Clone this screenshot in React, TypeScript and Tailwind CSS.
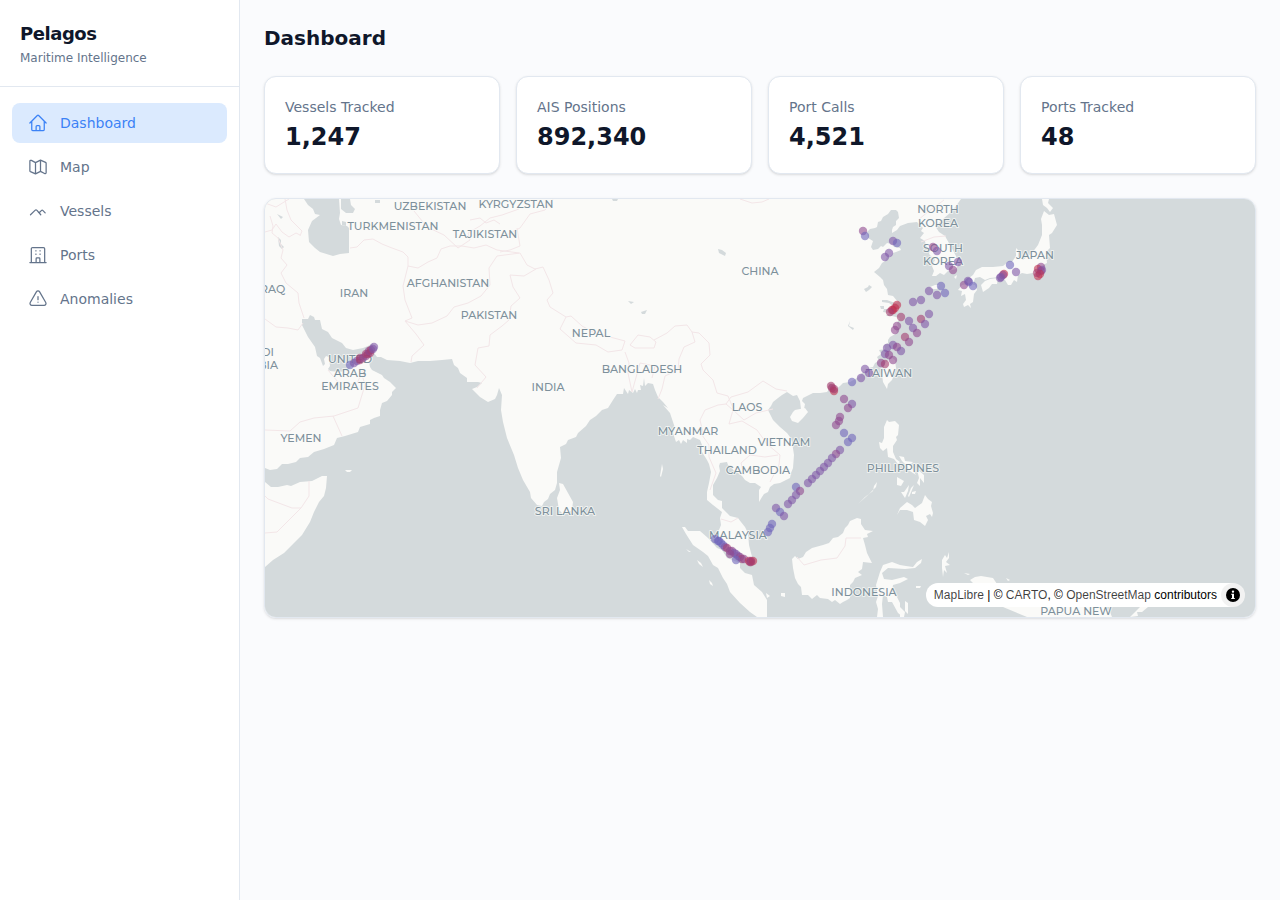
import React from "react";
import { HiOutlineExclamationTriangle, HiOutlineHome } from "react-icons/hi2";

const stroke = {
  width: 20,
  height: 20,
  viewBox: "0 0 24 24",
  fill: "none",
  stroke: "currentColor",
  strokeWidth: 1.5,
  strokeLinecap: "round",
  strokeLinejoin: "round",
  "aria-hidden": true,
} as const;

function MapIcon() {
  return (
    <svg {...stroke}>
      <path d="M9 6.75v13.5M15 3.75v13.5M9 6.75 4.1 4.1C3.2 3.6 2.25 4.2 2.25 5.1v11.3c0 .5.3.9.7 1.1L9 20.25l6-3 4.9 2.5c.9.5 1.85-.1 1.85-1V7.6c0-.5-.3-.9-.7-1.1L15 3.75Z" />
    </svg>
  );
}

function VesselIcon() {
  return (
    <svg {...stroke}>
      <path d="M3 16.5 8.4 11.3c.7-.7 1.7-.7 2.4 0l4.5 5.2M12.6 13.6l1.4-.1 2-2c.6-.6 1.4-.6 2 0l2.6 2.7" />
    </svg>
  );
}

function PortIcon() {
  return (
    <svg {...stroke}>
      <path d="M2.25 21h19.5M4 21V4.5C4 3.7 4.7 3 5.5 3h13c.8 0 1.5.7 1.5 1.5V21M9.3 7h.4M14.3 7h.4M9.3 11h.4M14.3 11h.4M9.75 21v-4.5c0-.6.4-1 1-1h2.5c.6 0 1 .4 1 1V21" />
    </svg>
  );
}

const nav = [
  { label: "Dashboard", icon: <HiOutlineHome size={20} />, active: true },
  { label: "Map", icon: <MapIcon /> },
  { label: "Vessels", icon: <VesselIcon /> },
  { label: "Ports", icon: <PortIcon /> },
  { label: "Anomalies", icon: <HiOutlineExclamationTriangle size={20} /> },
];

const stats = [
  { label: "Vessels Tracked", value: "1,247" },
  { label: "AIS Positions", value: "892,340" },
  { label: "Port Calls", value: "4,521" },
  { label: "Ports Tracked", value: "48" },
];

const land = [
  // Eurasia and Arabia
  "265,199 961,199 956,206 950,213 944,218 939,223 935,226 939,232 945,236 950,245 956,256 959,263 956,269 948,271 944,275 940,273 936,276 932,276 934,271 932,266 935,260 929,254 930,249 926,246 925,241 920,238 924,233 921,231 923,228 917,222 908,223 900,226 897,230 892,233 892,230 893,227 896,225 896,221 899,218 898,212 896,210 891,210 888,214 883,217 881,221 878,222 877,227 875,228 870,229 867,232 868,238 873,241 871,247 873,250 878,249 881,246 883,247 887,243 892,244 894,247 900,248 901,250 896,252 893,253 890,257 887,257 885,261 882,263 879,268 874,272 880,277 883,280 884,285 887,289 888,295 893,296 898,302 895,303 887,300 882,300 882,302 889,303 893,306 889,309 884,309 883,312 889,313 886,316 892,316 900,318 897,323 899,328 896,330 897,333 890,337 888,340 888,343 884,345 885,349 879,350 881,354 877,357 879,361 875,363 873,367 868,368 867,371 863,372 857,378 850,382 843,383 840,386 835,390 832,384 828,383 830,388 827,392 820,393 813,393 803,398 802,401 805,404 804,409 801,409 800,401 797,395 793,396 787,392 782,395 778,398 773,402 771,406 768,410 773,420 780,427 787,433 790,437 792,442 794,455 793,468 791,473 790,478 786,480 780,483 774,484 770,487 768,492 764,494 762,497 759,502 759,490 761,487 755,483 750,483 745,480 742,476 738,473 733,470 731,465 728,465 727,462 720,463 719,466 720,471 717,478 713,485 713,495 718,500 722,501 722,508 727,513 730,516 738,518 741,522 745,527 748,533 749,545 751,553 753,560 746,563 740,560 733,555 728,550 723,548 717,542 714,536 719,530 721,525 720,518 722,512 713,505 707,500 707,492 709,483 711,472 709,464 707,460 702,452 702,445 700,440 693,437 690,440 687,439 687,443 683,440 681,444 679,440 676,442 673,433 675,428 673,422 670,413 663,405 668,408 663,402 658,397 655,390 653,384 648,383 645,386 644,378 643,386 640,385 641,390 638,390 637,393 635,389 633,393 629,390 628,394 624,388 623,394 617,394 613,400 608,408 602,410 596,416 590,420 586,426 578,433 576,437 568,440 566,444 560,447 561,458 559,465 557,472 557,483 555,490 550,494 548,499 544,502 542,506 537,505 531,498 530,492 523,480 518,468 514,455 507,438 503,422 501,410 502,395 499,388 497,395 495,399 488,402 480,397 472,389 477,387 482,383 478,382 467,382 467,378 460,373 458,368 454,365 452,359 442,360 430,361 418,361 410,363 400,361 387,360 381,357 377,357 372,350 373,343 368,346 363,348 353,350 346,348 342,343 332,338 328,332 322,329 320,320 315,320 314,317 310,315 308,319 302,319 302,325 308,337 315,347 317,356 320,358 323,366 325,364 324,359 326,356 329,357 330,366 328,369 330,371 340,372 348,370 353,365 357,362 367,357 371,350 373,354 369,362 370,367 372,370 382,375 384,378 390,382 396,388 392,392 392,395 387,401 382,403 380,410 380,416 374,418 370,420 370,424 360,427 358,432 345,436 337,438 334,445 324,449 314,452 308,457 300,458 296,462 288,464 282,464 277,469 270,470 265,468",
  // Horn of Africa
  "265,482 271,487 278,487 287,485 291,486 300,482 312,481 322,476 327,476 326,488 324,496 319,502 314,512 310,522 302,535 294,543 284,553 273,560 265,567",
  // Socotra
  "345,470 352,470 350,472 347,472",
  // Sri Lanka
  "559,483 563,484 568,493 573,502 572,510 568,513 563,514 559,510 557,498 560,490",
  // Andaman Islands
  "662,464 663,469 661,477 660,476",
  // Sumatra
  "682,527 685,527 688,531 700,531 708,538 717,548 722,550 727,558 740,563 740,568 745,573 752,575 754,585 762,592 767,600 767,617 757,617 750,612 740,603 730,592 727,584 723,578 718,568 713,565 708,556 703,552 693,545 686,534",
  "686,549 691,552 689,552",
  "697,560 701,563 703,567 699,564",
  "709,580 712,583 713,586 710,584",
  "766,593 770,596 767,598",
  "781,593 785,593 785,597 781,596",
  // Borneo
  "792,559 795,556 798,559 803,557 806,552 812,548 823,545 829,543 833,538 838,537 843,533 845,528 848,525 850,521 857,518 861,519 861,524 865,530 873,531 867,534 868,537 863,538 865,545 867,553 872,563 863,562 862,569 858,572 862,575 855,578 853,582 850,585 850,598 847,600 843,602 840,604 835,600 832,602 828,599 820,598 817,595 812,599 808,595 802,595 801,587 798,584 795,578 793,568",
  // Sulawesi
  "880,572 883,565 892,562 900,565 906,566 913,567 917,562 922,559 921,563 915,568 905,569 888,568 882,573 884,579 892,580 900,578 904,577 908,579 900,583 893,585 892,592 897,597 900,603 900,609 903,613 903,617 898,613 892,602 888,602 887,597 883,595 882,604 883,617 877,617 878,609 876,602 878,596 876,585",
  "905,601 908,603 908,614 905,611",
  // Halmahera
  "942,560 945,555 947,558 949,552 949,558 946,562 950,565 945,566 947,573 944,570 943,577 942,568",
  "916,586 921,586 920,588 916,588",
  "964,573 970,574 968,575",
  // Luzon
  "887,420 889,422 895,421 899,425 898,435 896,437 897,440 893,446 893,452 896,459 900,462 898,464 894,459 888,457 887,448 883,451 880,448 879,442 882,443 884,438 884,427",
  "899,456 904,457 905,461 913,462 910,465 916,475 910,471 907,466 902,461",
  // Visayas
  "897,477 904,481 901,486 897,485",
  "909,485 908,491 905,498 901,492 904,492",
  "914,485 909,497 908,496 911,488",
  "917,469 924,475 924,483 920,478 920,486 917,483 919,478",
  "912,492 916,491 915,494 912,494",
  // Mindanao
  "897,515 900,508 907,502 912,505 915,508 922,503 925,495 928,499 932,502 931,506 933,513 932,517 930,514 926,516 928,520 925,526 920,522 914,520 913,512 907,510 900,510",
  // Palawan
  "858,504 865,497 873,491 874,486 877,482 876,487 868,495",
  // Taiwan
  "892,358 895,360 896,368 894,375 892,380 888,384 887,389 883,382 882,374 885,363",
  // Hainan
  "790,417 793,412 795,410 805,408 808,412 803,418 798,423 792,421",
  // Honshu
  "1042,225 1041,219 1044,211 1049,215 1054,214 1057,225 1052,233 1049,235 1050,248 1046,252 1047,263 1043,265 1041,278 1035,278 1033,273 1027,274 1022,273 1018,275 1017,282 1014,280 1011,285 1008,285 1005,280 1000,277 990,278 985,280 980,277 975,278 973,285 967,283 969,278 973,275 976,270 982,267 993,267 1003,266 1008,262 1012,262 1016,256 1016,248 1018,250 1018,257 1023,260 1032,253 1038,245 1042,235",
  "1042,199 1049,199 1048,203 1053,208 1050,212 1047,208 1043,205",
  // Shikoku
  "981,285 985,281 990,279 998,278 997,284 992,284 989,288 983,292",
  // Kyushu
  "958,290 962,285 968,284 975,285 977,290 974,294 973,302 970,304 971,308 968,305 964,307 963,304 966,300 965,294 961,296 962,291",
  "954,277 957,275 956,279",
  // Jeju
  "930,287 935,285 939,285 937,289 931,289",
  // New Guinea
  "970,580 975,577 981,576 987,577 993,578 997,584 1030,590 1080,600 1105,607 1110,612 1112,617 1027,617 1015,612 1003,607 985,600 980,590",
  "1140,607 1148,607 1142,612 1137,612 1138,616 1130,617",
  "1006,578 1010,580 1008,581",
  "900,607 905,612 904,617 900,617",
];

const lakes = [
  "304,199 308,205 313,209 315,214 320,215 312,221 308,230 309,242 315,248 320,252 333,256 340,254 349,253 349,228 347,226 341,225 339,219 340,213 339,199",
  "341,199 350,199 351,205 355,209 353,213 346,213 341,209",
  "342,221 346,222 346,226 342,225",
  "375,200 380,200 380,203 375,203",
  "278,237 281,240 281,244 284,247 282,249 279,246",
  "277,214 283,217 281,219",
  "612,199 618,199 617,201 613,201",
  "718,249 722,250 726,253 725,256 719,253",
  "628,301 634,302 631,304",
  "641,312 647,310 645,314 642,314",
  "850,321 849,326 854,328 853,330 848,326",
  "864,289 868,287 869,285 872,287 869,290 866,292",
  "880,306 884,306 884,309 881,309",
];

const borders = [
  "265,232 272,230 276,224 282,232 289,237 296,233 300,235",
  "285,199 287,210 291,220 297,226 302,231 300,236",
  "270,216 273,226 272,233 278,238 283,250 281,258 287,265 281,273 286,283 298,293 299,303 304,318",
  "265,319 276,327 288,328 298,330 303,323",
  "350,248 357,247 364,240 373,239 382,244 392,248 403,252 408,257 408,266",
  "408,266 403,286 405,300 412,318 405,321",
  "408,266 418,268 428,262 437,258 441,249 450,246 462,246 474,248 486,245 497,250 519,253",
  "405,321 418,325 432,323 447,316 454,307 468,303 481,296 490,285 489,268 497,256 520,253",
  "405,321 416,334 424,345 412,356 411,362",
  "414,211 427,227 444,235 458,248",
  "458,248 470,240 468,233 480,226 490,218 502,215 519,209",
  "470,220 480,218 486,223 494,220 500,224",
  "500,238 520,228 530,214 545,210 553,199",
  "517,228 520,246 510,250 500,252",
  "520,253 527,265 535,269 543,267 549,280 553,293 547,300 550,307 566,317",
  "536,269 524,276 510,275 513,287 520,298 511,306 509,320 502,326 490,335 489,346 478,348 475,365 486,377 477,388",
  "566,317 560,329 576,343 596,345 608,352 622,350 625,341 610,337 595,333 582,326 571,316 566,317",
  "630,345 638,335 650,337 656,342 654,348 635,348 630,345",
  "654,340 667,333 675,326 687,325 692,332 699,333 709,343 710,355 701,364 703,370 713,380 717,393 728,396 733,408",
  "692,332 695,342 684,347 679,359 678,370 665,376 662,389 658,399",
  "625,352 629,363 628,373 632,392 640,363 655,366 652,378",
  "703,433 700,420 705,410 718,405 726,404 733,410 744,420 756,413 773,409",
  "702,435 709,445 709,457 716,473 710,490",
  "726,404 731,397 748,392 763,381 776,389 787,391",
  "733,410 729,424 742,421 757,430 767,444 780,455 779,465 770,482",
  "744,475 741,463 750,455 765,457 778,455",
  "721,519 731,522 738,518",
  "797,557 804,565 821,560 837,558 845,546 846,538 861,538",
  "265,430 290,431 300,422 314,418 334,416 358,408 365,385 360,368",
  "333,416 342,436",
  "309,481 309,496 301,508 292,508 268,499 265,496",
  "301,508 277,532 265,533",
  "918,220 929,211 944,200",
  "921,242 934,237 946,236",
  "740,199 752,203 762,202 769,199",
  "265,203 276,207 289,199",
  "328,370 338,382 356,385 364,369",
];

const labels: [string, number, number][] = [
  ["UZBEKISTAN", 430, 210], ["KYRGYZSTAN", 516, 208], ["TURKMENISTAN", 393, 230],
  ["TAJIKISTAN", 485, 238], ["AFGHANISTAN", 448, 287], ["IRAN", 354, 297],
  ["IRAQ", 271, 293], ["PAKISTAN", 489, 319], ["NEPAL", 591, 337],
  ["CHINA", 760, 275], ["BANGLADESH", 642, 373], ["INDIA", 548, 391],
  ["SAUDI", 256, 356], ["ARABIA", 256, 369], ["UNITED", 350, 363],
  ["ARAB", 350, 377], ["EMIRATES", 350, 390], ["YEMEN", 301, 442],
  ["SRI LANKA", 565, 515], ["LAOS", 747, 411], ["MYANMAR", 688, 435],
  ["VIETNAM", 784, 446], ["THAILAND", 727, 454], ["CAMBODIA", 758, 474],
  ["MALAYSIA", 738, 539], ["INDONESIA", 864, 596], ["PHILIPPINES", 903, 472],
  ["TAIWAN", 889, 377], ["NORTH", 938, 213], ["KOREA", 938, 227],
  ["SOUTH", 943, 252], ["KOREA", 943, 265], ["JAPAN", 1035, 259],
  ["PAPUA NEW", 1076, 615],
];

const heat: Record<string, string> = {
  a: "#6f66ba",
  b: "#7f57a6",
  c: "#904a90",
  d: "#a43e70",
  e: "#c03050",
};

const positions = `
350,365,a 354,363,b 357,361,b 360,360,d 360,358,d 363,358,c 366,356,c 366,354,d 368,354,d 370,353,d 369,351,c 371,350,d 373,349,b 374,347,b
715,539,a 718,541,a 719,541,a 721,543,a 723,545,a 725,547,b 727,548,d 730,551,c 732,551,c 734,553,b 736,554,b 738,556,b 740,557,c 742,559,d 744,559,c 730,554,c 736,560,a
749,561,e 750,562,d 751,561,c 753,561,e 751,562,d
863,231,c 865,236,a 893,241,b 897,243,a 889,253,b 885,257,b
897,305,e 895,308,e 893,310,e 892,310,e 890,312,d
901,317,d 909,321,b 913,328,b 917,333,c 905,337,d 909,342,c 897,326,c 895,330,c
893,345,b 897,347,c 901,351,b 887,348,b 885,354,b 889,355,c 893,360,c 881,363,c 885,364,d 865,369,b 869,373,b 861,378,b 852,382,a
831,386,d 832,388,d 834,391,e 834,389,d 844,399,c 852,404,b 848,408,c
840,417,c 839,421,c 836,425,c 844,433,a 852,438,a 848,442,a 840,450,b 836,454,c 832,458,b 828,463,b 824,467,b 820,471,b 816,475,b 812,479,b 808,483,b
796,487,a 800,491,c 796,495,b 792,500,b 788,504,b 776,508,b 780,512,a 784,516,b 772,524,a 770,528,a 768,532,a
933,247,c 937,251,b 958,262,b 949,266,b 953,270,c 964,285,c 969,282,a 968,281,b 973,286,a 1010,265,a 1016,272,b
1004,274,e 1003,275,c 1000,278,b 1001,277,b 1041,267,c 1038,269,e 1042,270,b 1041,271,c 1038,276,e 1040,274,e 1037,273,d
929,291,b 941,286,a 937,295,b 945,293,a 913,302,b 921,300,b 929,314,b 921,319,d 925,324,b`
  .trim()
  .split(/\s+/)
  .map((p) => p.split(","));

function TrafficMap() {
  return (
    <svg
      className="block h-full w-full bg-[#d4dadc]"
      viewBox="265 199 990 418"
      preserveAspectRatio="xMidYMid slice"
      role="img"
      aria-label="Vessel traffic map"
    >
      <g fill="#fafaf8">
        {land.map((p) => <polygon key={p} points={p} />)}
      </g>
      <g fill="#d4dadc">
        {lakes.map((p) => <polygon key={p} points={p} />)}
      </g>
      <g fill="none" stroke="#f3e6e8" strokeLinejoin="round">
        {borders.map((p) => <polyline key={p} points={p} />)}
      </g>
      <g
        className="font-['Montserrat','Inter',sans-serif] text-[11px] font-medium"
        fill="#7d909b"
        stroke="#fafaf8"
        strokeOpacity="0.7"
        strokeWidth="2"
        strokeLinejoin="round"
        paintOrder="stroke"
        textAnchor="middle"
      >
        {labels.map(([t, x, y]) => <text key={`${t}${y}`} x={x} y={y}>{t}</text>)}
      </g>
      <g fillOpacity="0.6">
        {positions.map(([x, y, h], i) => <circle key={i} cx={x} cy={y} r="4.2" fill={heat[h]} />)}
      </g>
    </svg>
  );
}

export default function App() {
  return (
    <div className="flex min-h-screen bg-[#fafbfd] font-['DejaVu_Sans',sans-serif] text-[#0f172a]">
      <aside className="w-60 shrink-0 border-r border-[#e2e8f0] bg-white">
        <div className="border-b border-[#e2e8f0] p-5">
          <p className="text-lg leading-7 font-bold tracking-tight">Pelagos</p>
          <p className="mt-0.5 text-xs text-[#64748b]">Maritime Intelligence</p>
        </div>
        <nav className="flex flex-col gap-1 px-3 py-4">
          {nav.map((item) => (
            <a
              key={item.label}
              href="#"
              aria-current={item.active ? "page" : undefined}
              className={
                item.active
                  ? "flex h-10 items-center gap-3 rounded-lg bg-[#dbeafe] px-4 text-sm text-[#3b82f6]"
                  : "flex h-10 items-center gap-3 rounded-lg px-4 text-sm text-[#64748b]"
              }
            >
              {item.icon}
              {item.label}
            </a>
          ))}
        </nav>
      </aside>
      <main className="min-w-0 flex-1 p-6">
        <h1 className="text-xl leading-7 font-bold">Dashboard</h1>
        <dl className="mt-6 grid grid-cols-2 gap-4 lg:grid-cols-4">
          {stats.map((s) => (
            <div key={s.label} className="rounded-xl border border-[#e2e8f0] bg-white p-5 shadow-sm">
              <dt className="text-sm text-[#64748b]">{s.label}</dt>
              <dd className="mt-1 text-2xl font-bold">{s.value}</dd>
            </div>
          ))}
        </dl>
        <section className="relative mt-6 h-[420px] overflow-hidden rounded-xl border border-[#e2e8f0] shadow-sm">
          <TrafficMap />
          <div className="absolute right-2.5 bottom-2.5 flex h-6 items-center gap-1 rounded-full bg-white pl-2 font-['Liberation_Sans',sans-serif] text-xs text-black">
            <p>
              <a href="#" className="text-black/75">MapLibre</a> | © <a href="#" className="text-black/75">CARTO</a>, ©{" "}
              <a href="#" className="text-black/75">OpenStreetMap</a> contributors
            </p>
            <button type="button" aria-label="Toggle attribution" className="flex size-6 items-center justify-center rounded-full bg-black/5">
              <svg width="24" height="24" viewBox="0 0 24 24" aria-hidden="true">
                <circle cx="12" cy="12" r="7" />
                <path fill="#fff" d="M10.8 8.6a1.2 1.2 0 0 1 2.4 0 1.2 1.2 0 0 1-2.4 0ZM10.2 10.8H13V15h.8v1h-3.6v-1h.8v-3.2h-.8Z" />
              </svg>
            </button>
          </div>
        </section>
      </main>
    </div>
  );
}
